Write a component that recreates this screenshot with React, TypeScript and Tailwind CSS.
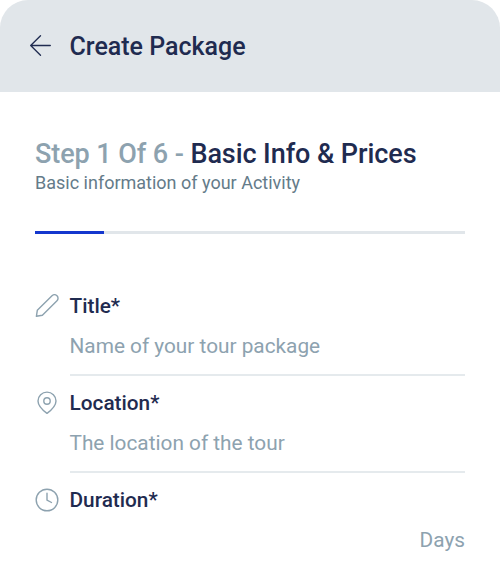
import React from 'react';

const PencilIcon = () => (
  <svg className="h-6 w-6" viewBox="0 0 24 24" fill="none" stroke="#8da2af" strokeWidth="1.4" strokeLinejoin="round">
    <path d="M1.400 22.300 2.300 16.300 17 1.700a3.500 3.500 0 0 1 5 5L7.400 21.300Z" />
  </svg>
);

const PinIcon = () => (
  <svg className="h-6 w-6" viewBox="0 0 24 24" fill="none" stroke="#8da2af" strokeWidth="1.400" strokeLinejoin="round">
    <path d="M21 9.900C21 15.200 15.500 19.700 12 22.400 8.500 19.700 3 15.200 3 9.900a9 8.800 0 0 1 18 0Z" />
    <circle cx="12" cy="10" r="3.200" />
  </svg>
);

const ClockIcon = () => (
  <svg className="h-6 w-6" viewBox="0 0 24 24" fill="none" stroke="#8da2af" strokeWidth="1.400" strokeLinecap="round" strokeLinejoin="round">
    <circle cx="12" cy="12" r="10.800" />
    <path d="M12 5.300V12.200l4.500 2.300" />
  </svg>
);

type FieldProps = { icon: React.ReactNode; label: string; text: string };

const Field = ({ icon, label, text }: FieldProps) => (
  <div className="flex h-[97px] items-start">
    <div className="w-[34.5px] shrink-0 pt-[2px]">{icon}</div>
    <div className="flex-1">
      <div className="h-7 text-[20.8px] leading-7 font-medium text-[#1f2b50]">{label}</div>
      <div className="mt-[9px] h-[35px] text-[20.8px] leading-[34px] text-[#8da2af]">{text}</div>
      <div className="mt-[9.500px] h-[2px] bg-[#e5eaed]" />
    </div>
  </div>
);

export default function App() {
  return (
    <div className="h-[566px] w-[500px] overflow-hidden bg-white font-['Roboto',sans-serif]">
      <header className="flex h-[91.5px] items-center rounded-t-[28px] bg-[#e1e6ea] pl-[29.500px]">
        <svg className="mr-[19px] h-[21px] w-[21px]" viewBox="0 0 21 21" fill="none" stroke="#1f2b50" strokeWidth="1.300" strokeLinecap="round" strokeLinejoin="round">
          <path d="M20.300 10.500H.800M10.500 .700.700 10.500l9.800 9.800" />
        </svg>
        <h1 className="pt-[2px] text-[25px] leading-8 font-medium text-[#1f2b50]">Create Package</h1>
      </header>
      <main className="pt-[44.500px] pr-[35px] pl-[35px]">
        <h2 className="text-[27px] leading-9 font-medium tracking-[-0.08px] whitespace-nowrap text-[#1f2b50]">
          <span className="text-[#8da2af]">Step 1 Of 6 - </span>Basic Info &amp; Prices
        </h2>
        <p className="-mt-[1px] text-[18px] leading-6 text-[#647b89]">Basic information of your Activity</p>
        <div className="mt-[36px] h-[3px] bg-[#e1e6ea]"><div className="h-full w-[69px] bg-[#1437ce]" /></div>
        <div className="mt-[58px]">
          <Field icon={<PencilIcon />} label="Title*" text="Name of your tour package" />
          <Field icon={<PinIcon />} label="Location*" text="The location of the tour" />
          <div className="flex items-start">
            <div className="w-[34.5px] pt-[2px]"><ClockIcon /></div>
            <div className="flex-1">
              <div className="text-[20.8px] leading-7 font-medium text-[#1f2b50]">Duration*</div>
              <div className="mt-[9px] text-right text-[20.8px] leading-[34px] text-[#8da2af]">Days</div>
            </div>
          </div>
        </div>
      </main>
    </div>
  );
}
